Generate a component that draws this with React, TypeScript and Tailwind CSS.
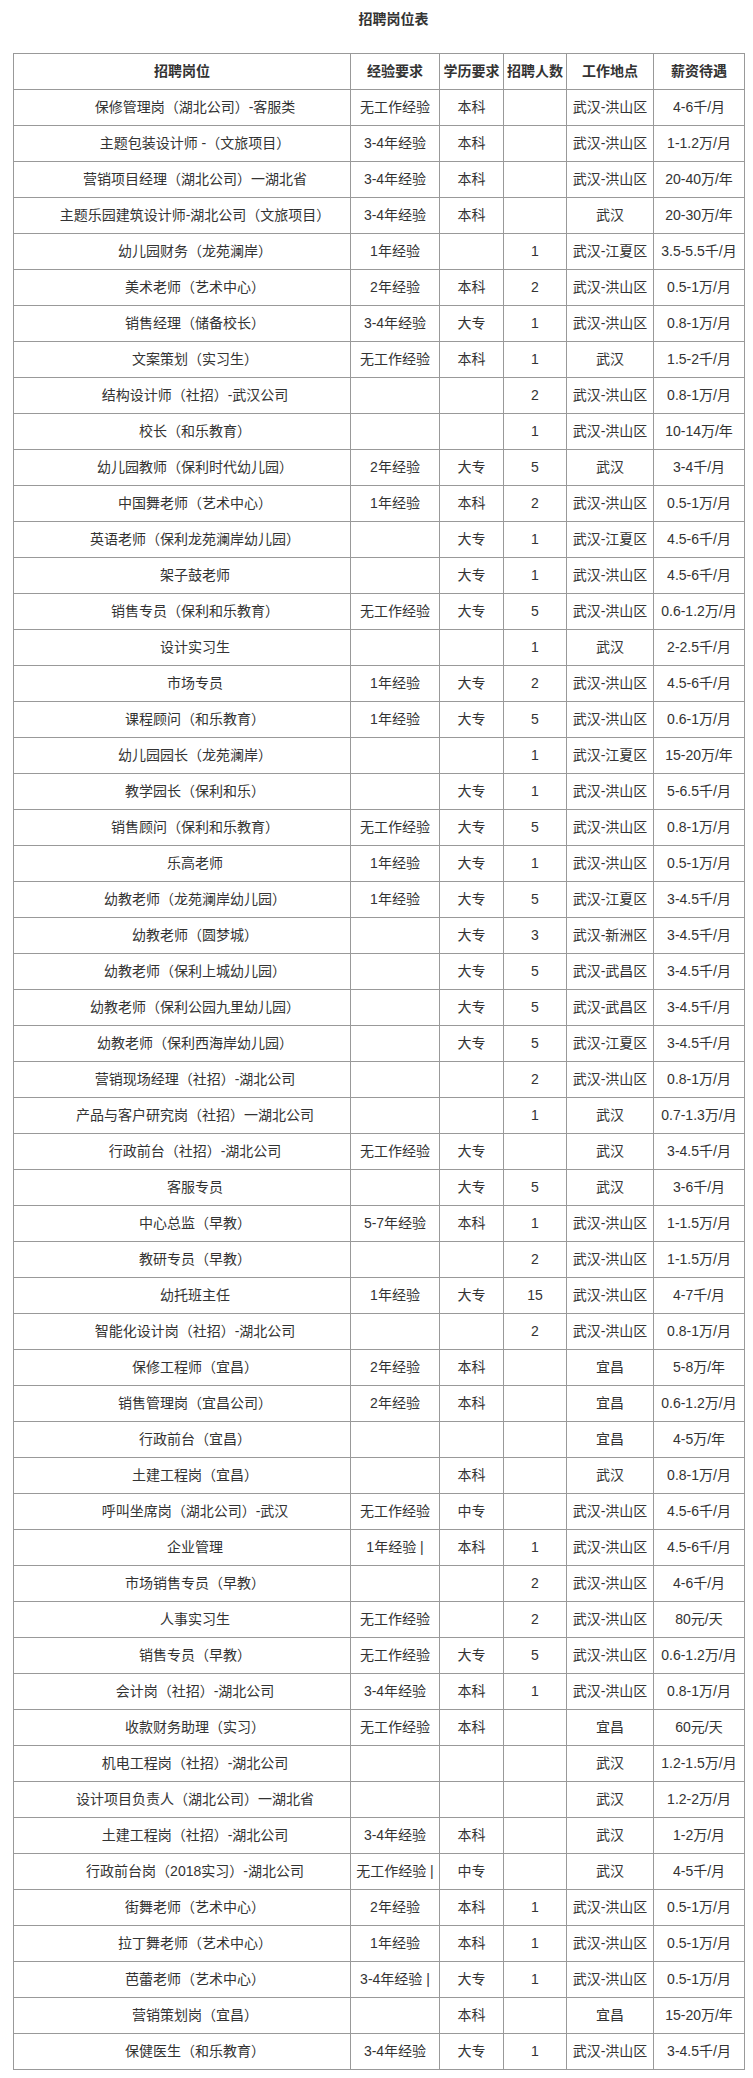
import React from 'react';

type Job = [string, string, string, string, string, string];

const headers = ['招聘岗位', '经验要求', '学历要求', '招聘人数', '工作地点', '薪资待遇'];

const jobs: Job[] = [
  ['保修管理岗（湖北公司）-客服类', '无工作经验', '本科', '', '武汉-洪山区', '4-6千/月'],
  ['主题包装设计师 -（文旅项目）', '3-4年经验', '本科', '', '武汉-洪山区', '1-1.2万/月'],
  ['营销项目经理（湖北公司）一湖北省', '3-4年经验', '本科', '', '武汉-洪山区', '20-40万/年'],
  ['主题乐园建筑设计师-湖北公司（文旅项目）', '3-4年经验', '本科', '', '武汉', '20-30万/年'],
  ['幼儿园财务（龙苑澜岸）', '1年经验', '', '1', '武汉-江夏区', '3.5-5.5千/月'],
  ['美术老师（艺术中心）', '2年经验', '本科', '2', '武汉-洪山区', '0.5-1万/月'],
  ['销售经理（储备校长）', '3-4年经验', '大专', '1', '武汉-洪山区', '0.8-1万/月'],
  ['文案策划（实习生）', '无工作经验', '本科', '1', '武汉', '1.5-2千/月'],
  ['结构设计师（社招）-武汉公司', '', '', '2', '武汉-洪山区', '0.8-1万/月'],
  ['校长（和乐教育）', '', '', '1', '武汉-洪山区', '10-14万/年'],
  ['幼儿园教师（保利时代幼儿园）', '2年经验', '大专', '5', '武汉', '3-4千/月'],
  ['中国舞老师（艺术中心）', '1年经验', '本科', '2', '武汉-洪山区', '0.5-1万/月'],
  ['英语老师（保利龙苑澜岸幼儿园）', '', '大专', '1', '武汉-江夏区', '4.5-6千/月'],
  ['架子鼓老师', '', '大专', '1', '武汉-洪山区', '4.5-6千/月'],
  ['销售专员（保利和乐教育）', '无工作经验', '大专', '5', '武汉-洪山区', '0.6-1.2万/月'],
  ['设计实习生', '', '', '1', '武汉', '2-2.5千/月'],
  ['市场专员', '1年经验', '大专', '2', '武汉-洪山区', '4.5-6千/月'],
  ['课程顾问（和乐教育）', '1年经验', '大专', '5', '武汉-洪山区', '0.6-1万/月'],
  ['幼儿园园长（龙苑澜岸）', '', '', '1', '武汉-江夏区', '15-20万/年'],
  ['教学园长（保利和乐）', '', '大专', '1', '武汉-洪山区', '5-6.5千/月'],
  ['销售顾问（保利和乐教育）', '无工作经验', '大专', '5', '武汉-洪山区', '0.8-1万/月'],
  ['乐高老师', '1年经验', '大专', '1', '武汉-洪山区', '0.5-1万/月'],
  ['幼教老师（龙苑澜岸幼儿园）', '1年经验', '大专', '5', '武汉-江夏区', '3-4.5千/月'],
  ['幼教老师（圆梦城）', '', '大专', '3', '武汉-新洲区', '3-4.5千/月'],
  ['幼教老师（保利上城幼儿园）', '', '大专', '5', '武汉-武昌区', '3-4.5千/月'],
  ['幼教老师（保利公园九里幼儿园）', '', '大专', '5', '武汉-武昌区', '3-4.5千/月'],
  ['幼教老师（保利西海岸幼儿园）', '', '大专', '5', '武汉-江夏区', '3-4.5千/月'],
  ['营销现场经理（社招）-湖北公司', '', '', '2', '武汉-洪山区', '0.8-1万/月'],
  ['产品与客户研究岗（社招）一湖北公司', '', '', '1', '武汉', '0.7-1.3万/月'],
  ['行政前台（社招）-湖北公司', '无工作经验', '大专', '', '武汉', '3-4.5千/月'],
  ['客服专员', '', '大专', '5', '武汉', '3-6千/月'],
  ['中心总监（早教）', '5-7年经验', '本科', '1', '武汉-洪山区', '1-1.5万/月'],
  ['教研专员（早教）', '', '', '2', '武汉-洪山区', '1-1.5万/月'],
  ['幼托班主任', '1年经验', '大专', '15', '武汉-洪山区', '4-7千/月'],
  ['智能化设计岗（社招）-湖北公司', '', '', '2', '武汉-洪山区', '0.8-1万/月'],
  ['保修工程师（宜昌）', '2年经验', '本科', '', '宜昌', '5-8万/年'],
  ['销售管理岗（宜昌公司）', '2年经验', '本科', '', '宜昌', '0.6-1.2万/月'],
  ['行政前台（宜昌）', '', '', '', '宜昌', '4-5万/年'],
  ['土建工程岗（宜昌）', '', '本科', '', '武汉', '0.8-1万/月'],
  ['呼叫坐席岗（湖北公司）-武汉', '无工作经验', '中专', '', '武汉-洪山区', '4.5-6千/月'],
  ['企业管理', '1年经验 |', '本科', '1', '武汉-洪山区', '4.5-6千/月'],
  ['市场销售专员（早教）', '', '', '2', '武汉-洪山区', '4-6千/月'],
  ['人事实习生', '无工作经验', '', '2', '武汉-洪山区', '80元/天'],
  ['销售专员（早教）', '无工作经验', '大专', '5', '武汉-洪山区', '0.6-1.2万/月'],
  ['会计岗（社招）-湖北公司', '3-4年经验', '本科', '1', '武汉-洪山区', '0.8-1万/月'],
  ['收款财务助理（实习）', '无工作经验', '本科', '', '宜昌', '60元/天'],
  ['机电工程岗（社招）-湖北公司', '', '', '', '武汉', '1.2-1.5万/月'],
  ['设计项目负责人（湖北公司）一湖北省', '', '', '', '武汉', '1.2-2万/月'],
  ['土建工程岗（社招）-湖北公司', '3-4年经验', '本科', '', '武汉', '1-2万/月'],
  ['行政前台岗（2018实习）-湖北公司', '无工作经验 |', '中专', '', '武汉', '4-5千/月'],
  ['街舞老师（艺术中心）', '2年经验', '本科', '1', '武汉-洪山区', '0.5-1万/月'],
  ['拉丁舞老师（艺术中心）', '1年经验', '本科', '1', '武汉-洪山区', '0.5-1万/月'],
  ['芭蕾老师（艺术中心）', '3-4年经验 |', '大专', '1', '武汉-洪山区', '0.5-1万/月'],
  ['营销策划岗（宜昌）', '', '本科', '', '宜昌', '15-20万/年'],
  ['保健医生（和乐教育）', '3-4年经验', '大专', '1', '武汉-洪山区', '3-4.5千/月'],
];

const cell =
  'h-[36px] flex items-center justify-center text-center whitespace-nowrap border-r border-b border-[#999]';

export default function App() {
  return (
    <div
      className="w-[753px] min-h-[2078px] bg-white text-[14px] text-[#333]"
      style={{ fontFamily: '"Liberation Sans", "Noto Sans CJK SC", sans-serif' }}
    >
      {/* title sits a little right of the table centre */}
      <h1 className="pt-[9px] pl-[34px] text-center text-[14px] leading-[20px] font-bold text-[#333]">
        招聘岗位表
      </h1>

      <div className="mt-[24px] ml-[13px] w-[732px] grid grid-cols-[337px_89px_64px_63px_87px_91px] border-l border-t border-[#999]">
        {headers.map((h) => (
          <div key={h} className={`${cell} font-bold`}>
            {h}
          </div>
        ))}

        {jobs.map((row, i) =>
          row.map((v, j) => (
            <div key={`${i}-${j}`} className={j === 0 ? `${cell} pl-[26px]` : cell}>
              {v}
            </div>
          ))
        )}
      </div>
    </div>
  );
}
